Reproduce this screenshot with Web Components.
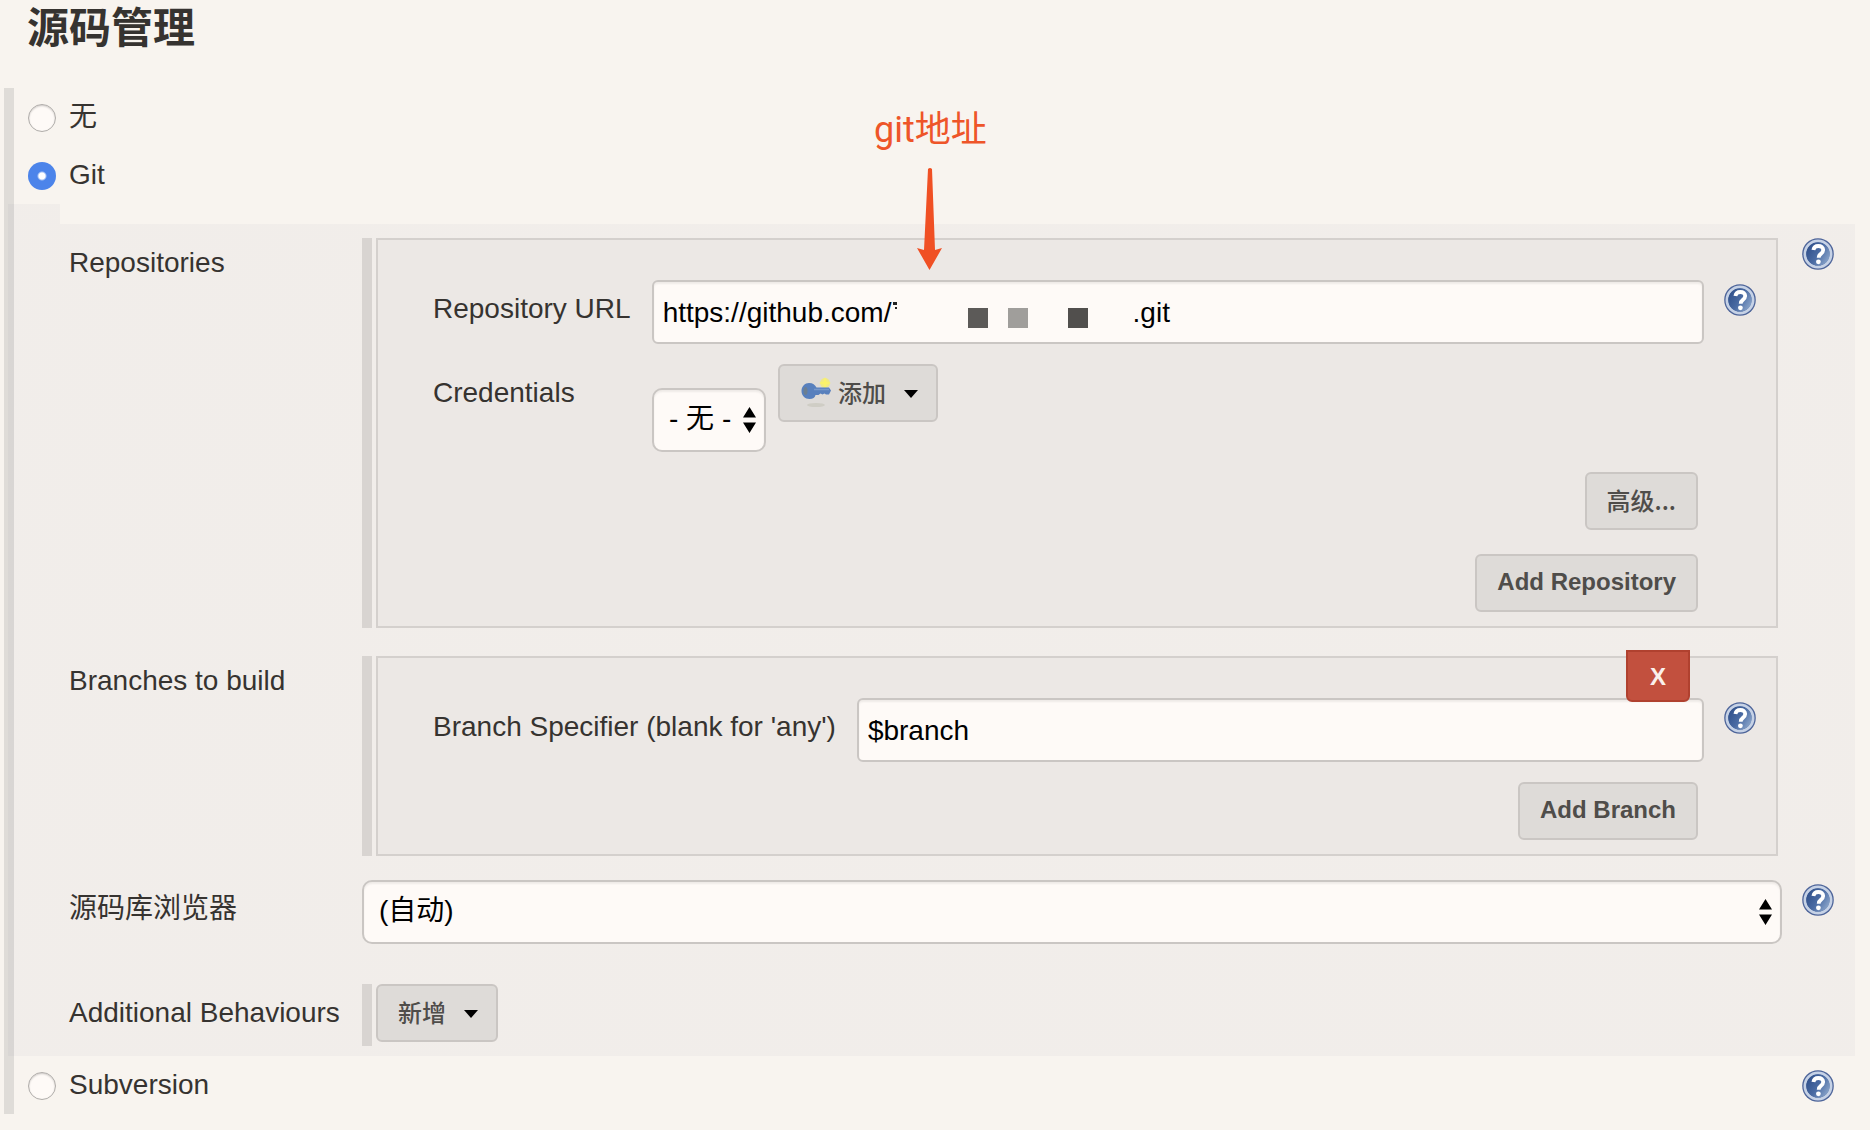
<!DOCTYPE html>
<html lang="zh-CN">
<head>
<meta charset="utf-8">
<title>源码管理</title>
<style>
    :root {
        --colour-page: #f8f4ef;
        --colour-text: #363330;
        --colour-bar: #dfdcd8;
        --colour-nested-bar: #d8d4d1;
        --colour-shade: rgba(30, 30, 80, 0.03);
        --colour-box: #ece8e5;
        --colour-box-border: #d4d0cd;
        --colour-field: #fefaf7;
        --colour-field-border: #cac6c3;
        --colour-button: #dedbd8;
        --colour-button-text: #4f4d4a;
        --colour-note: #ee5529;
    }
    body {
        margin: 0;
        background-color: var(--colour-page);
        color: var(--colour-text);
        font: 28px/32px "Liberation Sans", "Noto Sans CJK SC", sans-serif;
    }
</style>
</head>
<body>
<scm-section>
    <span slot="title">源码管理</span>
    <scm-radio>无</scm-radio>
    <scm-radio checked>Git</scm-radio>
    <scm-panel>
        <scm-row label="Repositories" block help>
            <scm-repeatable>
                <scm-text-field label="Repository URL" value="https://github.com/                               .git">
                    <scm-redaction></scm-redaction>
                </scm-text-field>
                <scm-credentials></scm-credentials>
                <scm-actions>
                    <scm-button medium>高级...</scm-button>
                    <scm-button>Add Repository</scm-button>
                </scm-actions>
            </scm-repeatable>
        </scm-row>
        <scm-row label="Branches to build" block>
            <scm-repeatable removable>
                <scm-text-field label="Branch Specifier (blank for 'any')" value="$branch"></scm-text-field>
                <scm-actions>
                    <scm-button>Add Branch</scm-button>
                </scm-actions>
            </scm-repeatable>
        </scm-row>
        <scm-row label="源码库浏览器" help>
            <scm-select wide label="源码库浏览器" option="(自动)"></scm-select>
        </scm-row>
        <scm-row label="Additional Behaviours">
            <scm-repeatable plain>
                <scm-button medium menu>新增</scm-button>
            </scm-repeatable>
        </scm-row>
    </scm-panel>
    <scm-radio help>Subversion</scm-radio>
    <scm-note slot="note">git地址</scm-note>
</scm-section>

<script>
class ScmSection extends HTMLElement {
    constructor() {
        super();
        this.attachShadow({mode: 'open'});
        this.shadowRoot.innerHTML = `
            <style>
                :host {
                    display: block;
                    position: relative;
                }
                h1 {
                    margin: 0;
                    padding: 1px 27px 31px;
                    font-size: 42px;
                    line-height: 56px;
                }
                .options {
                    margin-left: 4px;
                    border-left: 10px solid var(--colour-bar);
                }
            </style>
            <h1><slot name="title"></slot></h1>
            <div class="options"><slot></slot></div>
            <slot name="note"></slot>
        `;
        // radios sit in separate shadow roots, so keep them exclusive by hand
        this.addEventListener('scm-selected', (e) => {
            this.querySelectorAll('scm-radio').forEach((radio) => {
                radio.checked = radio === e.target;
            });
        });
    }
}

class ScmHelp extends HTMLElement {
    constructor() {
        super();
        this.attachShadow({mode: 'open'});
        this.shadowRoot.innerHTML = `
            <style>
                :host {
                    display: block;
                    width: 32px;
                    height: 32px;
                }
                button {
                    display: block;
                    padding: 0;
                    border: 0;
                    background: none;
                    cursor: pointer;
                }
                svg { display: block; }
            </style>
            <button type="button" aria-label="Help">
                <svg width="32" height="32" viewBox="0 0 32 32">
                    <defs>
                        <linearGradient id="fill" x1="0" y1="0.2" x2="1" y2="0.8">
                            <stop offset="0" stop-color="#2f4f8a"/>
                            <stop offset="0.5" stop-color="#4a6ba3"/>
                            <stop offset="1" stop-color="#8fa9cd"/>
                        </linearGradient>
                    </defs>
                    <circle cx="16" cy="16" r="15.8" fill="#4d6499"/>
                    <circle cx="16" cy="16" r="13" fill="none" stroke="#c6d2e6" stroke-width="3"/>
                    <circle cx="16" cy="16" r="11.8" fill="url(#fill)"/>
                    <path d="M11.4 12C11.800 9.200 13.600 8 16.300 8c2.900 0 4.900 1.500 4.900 4 0 2-1.100 3-2.600 4.100-1.400 1-1.900 1.700-1.900 3.600" fill="none" stroke="#fff" stroke-width="3.800"/>
                    <circle cx="16.400" cy="23.800" r="2.400" fill="#fff"/>
                </svg>
            </button>
        `;
    }
}

class ScmRadio extends HTMLElement {
    constructor() {
        super();
        this.attachShadow({mode: 'open'});
        this.shadowRoot.innerHTML = `
            <style>
                :host {
                    display: flex;
                    justify-content: space-between;
                    height: 58px;
                    padding: 0 36px 0 14px;
                    box-sizing: border-box;
                }
                label {
                    display: flex;
                    gap: 13px;
                    padding-top: 13px;
                }
                input {
                    appearance: none;
                    box-sizing: border-box;
                    width: 28px;
                    height: 28px;
                    margin: 3px 0 0;
                    border: 1px solid #b0adaa;
                    border-radius: 50%;
                    background: var(--colour-field);
                    box-shadow: inset 0 1px 2px #0003;
                }
                input:checked {
                    border: 0;
                    background: radial-gradient(circle, #fff 3px, #4c84ea 5px);
                    box-shadow: none;
                }
                scm-help { margin-top: 14px; }
            </style>
            <label><input type="radio"><span><slot></slot></span></label>
            ${this.hasAttribute('help') ? '<scm-help></scm-help>' : ''}
        `;
        this.input = this.shadowRoot.querySelector('input');
        this.input.checked = this.hasAttribute('checked');
        this.input.addEventListener('change', () => {
            this.dispatchEvent(new CustomEvent('scm-selected', {bubbles: true}));
        });
    }

    set checked(value) {
        this.input.checked = value;
    }
}

class ScmPanel extends HTMLElement {
    constructor() {
        super();
        this.attachShadow({mode: 'open'});
        this.shadowRoot.innerHTML = `
            <style>
                /* shaded area overlaps the section bar and has a tab at its top left */
                :host {
                    display: flex;
                    flex-direction: column;
                    margin: 0 15px 0 -6px;
                    padding: 34px 21px 10px 61px;
                    background:
                        linear-gradient(var(--colour-shade), var(--colour-shade)) 0 0 / 52px 20px no-repeat,
                        linear-gradient(var(--colour-shade), var(--colour-shade)) 0 20px / 100% calc(100% - 20px) no-repeat;
                }
                ::slotted(scm-row:nth-child(1)) { margin-bottom: 28px; }
                ::slotted(scm-row:nth-child(2)) { margin-bottom: 24px; }
                ::slotted(scm-row:nth-child(3)) { margin-bottom: 40px; }
            </style>
            <slot></slot>
        `;
    }
}

class ScmRow extends HTMLElement {
    constructor() {
        super();
        this.attachShadow({mode: 'open'});
        this.shadowRoot.innerHTML = `
            <style>
                :host {
                    display: grid;
                    grid-template-columns: 273px minmax(0, 1fr) 32px;
                    column-gap: 20px;
                    align-items: start;
                }
                .label {
                    padding-top: 13px;
                    white-space: nowrap;
                }
                scm-help { margin-top: 4px; }
                :host([block]) .label { padding-top: 9px; }
                :host([block]) scm-help { margin-top: 0; }
            </style>
            <span class="label">${this.getAttribute('label')}</span>
            <slot></slot>
            ${this.hasAttribute('help') ? '<scm-help></scm-help>' : ''}
        `;
    }
}

class ScmRepeatable extends HTMLElement {
    constructor() {
        super();
        this.attachShadow({mode: 'open'});
        this.shadowRoot.innerHTML = `
            <style>
                :host {
                    display: flex;
                    gap: 4px;
                    margin-right: 4px;
                }
                .bar {
                    width: 10px;
                    background-color: var(--colour-nested-bar);
                }
                .box {
                    position: relative;
                    flex: 1;
                    display: flex;
                    flex-direction: column;
                    gap: 20px;
                    padding: 40px 20px 14px 55px;
                    border: 2px solid var(--colour-box-border);
                    background-color: var(--colour-box);
                }
                :host([plain]) .box {
                    padding: 0 0 4px;
                    border: 0;
                    background: none;
                    align-items: flex-start;
                }
                .remove {
                    position: absolute;
                    top: -8px;
                    right: 86px;
                    padding: 11px 22px 9px;
                    border: 2px solid #b0412f;
                    border-radius: 0 0 6px 6px;
                    background-color: #c2503e;
                    color: #faf0ec;
                    font: bold 24px/28px "Liberation Sans", sans-serif;
                    cursor: pointer;
                }
            </style>
            <div class="bar"></div>
            <div class="box">
                <slot></slot>
                ${this.hasAttribute('removable') ? '<button type="button" class="remove">X</button>' : ''}
            </div>
        `;
    }
}

class ScmTextField extends HTMLElement {
    constructor() {
        super();
        this.attachShadow({mode: 'open'});
        this.shadowRoot.innerHTML = `
            <style>
                :host {
                    display: flex;
                    gap: 20px;
                    align-items: flex-start;
                }
                label {
                    padding: 13px 1px 0 0;
                    white-space: nowrap;
                }
                .field {
                    position: relative;
                    flex: 1;
                }
                input {
                    display: block;
                    box-sizing: border-box;
                    width: 100%;
                    height: 64px;
                    padding: 2px 9px 0;
                    border: 2px solid var(--colour-field-border);
                    border-radius: 6px;
                    background-color: var(--colour-field);
                    box-shadow: inset 0 2px 2px #00000010;
                    color: #000;
                    font: inherit;
                }
                scm-help { margin-top: 4px; }
            </style>
            <label for="value">${this.getAttribute('label')}</label>
            <div class="field">
                <input id="value" type="text">
                <slot></slot>
            </div>
            <scm-help></scm-help>
        `;
        this.shadowRoot.querySelector('input').value = this.getAttribute('value');
    }
}

// blocks that hide the private part of the address
class ScmRedaction extends HTMLElement {
    constructor() {
        super();
        this.attachShadow({mode: 'open'});
        this.shadowRoot.innerHTML = `
            <style>
                :host {
                    position: absolute;
                    top: 20px;
                    left: 240px;
                    pointer-events: none;
                }
                svg { display: block; }
            </style>
            <svg width="200" height="30" viewBox="0 0 200 30">
                <path d="M1 2h2v3h-2zM3 2h2v3h-2zM3 7h2v2h-2z" fill="#222"/>
                <rect x="76" y="8" width="20" height="20" fill="#5c5a58"/>
                <rect x="116" y="8" width="20" height="20" fill="#a09e9b"/>
                <rect x="176" y="8" width="20" height="20" fill="#514f4d"/>
            </svg>
        `;
    }
}

class ScmSelect extends HTMLElement {
    constructor() {
        super();
        this.attachShadow({mode: 'open'});
        this.shadowRoot.innerHTML = `
            <style>
                :host {
                    display: block;
                    position: relative;
                }
                select {
                    appearance: none;
                    display: block;
                    box-sizing: border-box;
                    height: 64px;
                    padding: 0 32px 2px 15px;
                    border: 2px solid var(--colour-field-border);
                    border-radius: 10px;
                    background-color: var(--colour-field);
                    box-shadow: inset 0 2px 2px #00000010;
                    color: #000;
                    font: inherit;
                }
                :host([wide]) select { width: 100%; }
                svg {
                    position: absolute;
                    top: 19px;
                    right: 10px;
                    pointer-events: none;
                }
            </style>
            <select aria-label="${this.getAttribute('label')}">
                <option>${this.getAttribute('option')}</option>
            </select>
            <svg width="13" height="26" viewBox="0 0 13 26">
                <path d="M6.500 0L13 10.500H0zM0 15.500H13L6.500 26z" fill="#000"/>
            </svg>
        `;
    }
}

class ScmCredentials extends HTMLElement {
    constructor() {
        super();
        this.attachShadow({mode: 'open'});
        this.shadowRoot.innerHTML = `
            <style>
                :host {
                    display: flex;
                    gap: 12px;
                    align-items: flex-start;
                }
                .label {
                    width: 207px;
                    padding-top: 13px;
                }
                scm-select { margin-top: 24px; }
            </style>
            <span class="label">Credentials</span>
            <scm-select label="Credentials" option="- 无 -"></scm-select>
            <scm-button medium menu key>添加</scm-button>
        `;
    }
}

class ScmActions extends HTMLElement {
    constructor() {
        super();
        this.attachShadow({mode: 'open'});
        this.shadowRoot.innerHTML = `
            <style>
                :host {
                    display: flex;
                    flex-direction: column;
                    align-items: flex-end;
                    gap: 24px;
                    padding-right: 58px;
                }
            </style>
            <slot></slot>
        `;
    }
}

class ScmButton extends HTMLElement {
    constructor() {
        super();
        this.attachShadow({mode: 'open'});
        const key = `
            <svg class="key" width="32" height="32" viewBox="0 0 32 32">
                <ellipse cx="16" cy="29" rx="9" ry="2" fill="#cfcdc5"/>
                <circle cx="25" cy="7" r="5" fill="#f1ea84"/>
                <path d="M25 1l1.500 4.500L31 7l-4.500 1.500L25 13l-1.500-4.500L19 7l4.500-1.500z" fill="#fbf36a"/>
                <path d="M9 7c4 0 6 2 7.500 4.500H29l2 3-2 4h-3l-1.500-1-2 1-2-1-2 1.500h-3C15 21.500 13 23 9.500 23 5 23 1.500 19.500 1.500 15S5 7 9 7z" fill="#5880bd"/>
                <path d="M14 13.500H29" stroke="#7798cb" stroke-width="1.500"/>
                <ellipse cx="5.500" cy="15" rx="2" ry="4" fill="#6c7f91"/>
            </svg>`;
        const caret = `
            <svg class="caret" width="14" height="8" viewBox="0 0 14 8">
                <path d="M0 0H14L7 8z" fill="#000"/>
            </svg>`;
        this.shadowRoot.innerHTML = `
            <style>
                :host { display: block; }
                button {
                    display: flex;
                    align-items: center;
                    padding: 12px 20px 14px;
                    border: 2px solid var(--colour-field-border);
                    border-radius: 6px;
                    background-color: var(--colour-button);
                    color: var(--colour-button-text);
                    font: bold 24px/28px "Liberation Sans", "Noto Sans CJK SC", sans-serif;
                    cursor: pointer;
                }
                :host([medium]) button {
                    font-family: "Noto Sans CJK SC", sans-serif;
                    font-weight: 500;
                }
                :host([menu]) button { padding-right: 18px; }
                .key { margin: -2px 6px -2px 0; }
                .caret { margin: 3px 0 0 18px; }
            </style>
            <button type="button">
                ${this.hasAttribute('key') ? key : ''}
                <span><slot></slot></span>
                ${this.hasAttribute('menu') ? caret : ''}
            </button>
        `;
    }
}

class ScmNote extends HTMLElement {
    constructor() {
        super();
        this.attachShadow({mode: 'open'});
        this.shadowRoot.innerHTML = `
            <style>
                :host {
                    position: absolute;
                    top: 108px;
                    left: 874px;
                    color: var(--colour-note);
                    font: 36px/44px Roboto, "Noto Sans CJK SC", sans-serif;
                    pointer-events: none;
                }
                svg {
                    display: block;
                    margin: 16px 0 0 42px;
                }
            </style>
            <slot></slot>
            <svg width="26" height="102" viewBox="0 0 26 102">
                <path d="M12 1Q14 -1 16 1L19 82L26 80L13.500 102L1 80L8 82z" fill="#f05024"/>
            </svg>
        `;
    }
}

customElements.define('scm-help', ScmHelp);
customElements.define('scm-button', ScmButton);
customElements.define('scm-select', ScmSelect);
customElements.define('scm-redaction', ScmRedaction);
customElements.define('scm-text-field', ScmTextField);
customElements.define('scm-credentials', ScmCredentials);
customElements.define('scm-actions', ScmActions);
customElements.define('scm-repeatable', ScmRepeatable);
customElements.define('scm-row', ScmRow);
customElements.define('scm-panel', ScmPanel);
customElements.define('scm-radio', ScmRadio);
customElements.define('scm-note', ScmNote);
customElements.define('scm-section', ScmSection);
</script>
</body>
</html>
